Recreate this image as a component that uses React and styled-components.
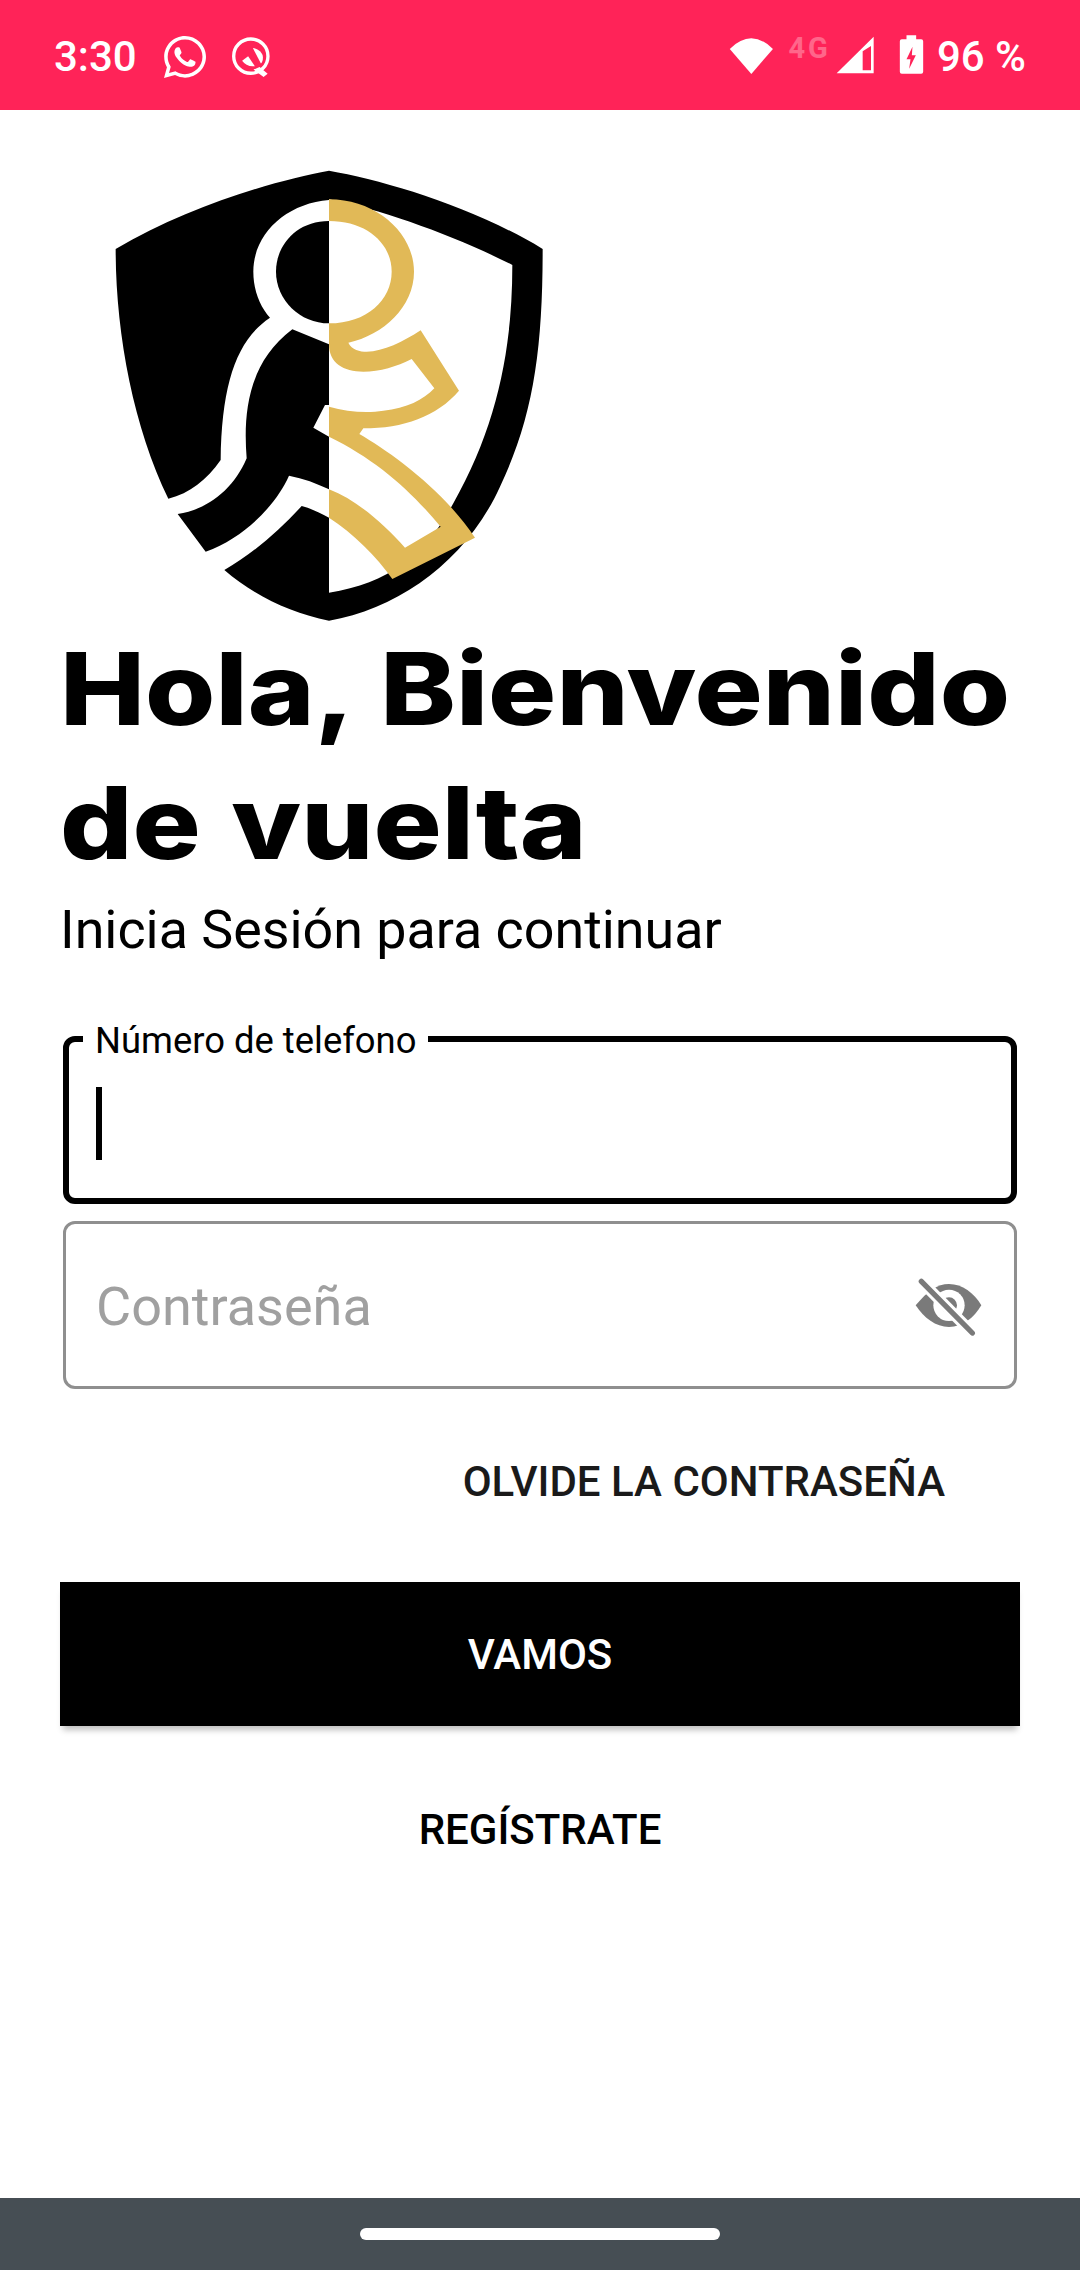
import React from 'react';
import styled, { createGlobalStyle } from 'styled-components';
import { FaWhatsapp } from 'react-icons/fa';

const GlobalStyle = createGlobalStyle`
  html, body {
    margin: 0;
    padding: 0;
    background: #fff;
    font-family: Roboto, "Liberation Sans", sans-serif;
  }
`;

const Page = styled.div`
  width: 1080px;
  height: 2270px;
  display: flex;
  flex-direction: column;
  overflow: hidden;
`;

const StatusBar = styled.div`
  height: 110px;
  flex: none;
  background: #ff2358;
  color: #fff;
  display: flex;
  align-items: center;
  justify-content: space-between;
  padding: 3px 54px 0 54px;
  box-sizing: border-box;
`;

const StatusGroup = styled.div`
  display: flex;
  align-items: center;
`;

const StatusText = styled.span`
  font-size: 42px;
  font-weight: 500;
  line-height: 44px;
  margin: ${(p) => p.$margin || '0'};
`;

const NetworkText = styled.span`
  font-size: 29px;
  font-weight: 700;
  line-height: 28px;
  letter-spacing: 3px;
  opacity: 0.3;
  margin: -18px 0 0 14px;
`;

const StatusIcon = styled.svg`
  display: block;
  margin: -4px 0 0 ${(p) => p.$left || 0}px;
`;

const Main = styled.main`
  flex: 1;
  display: flex;
  flex-direction: column;
`;

const LogoMark = styled.svg`
  display: block;
  width: 480px;
  height: 452px;
  margin: 60px 0 0 90px;
  flex: none;
`;

const Title = styled.h1`
  margin: 0 0 0 60px;
  font-family: Inter, "Liberation Sans", sans-serif;
  font-size: 100px;
  font-weight: 800;
  line-height: 134px;
  word-spacing: 5px;
  color: #000;
  transform: scaleX(1.137);
  transform-origin: left center;
  white-space: nowrap;
`;

const TitleLine = styled.span`
  display: block;
`;

const Subtitle = styled.p`
  margin: 5px 0 0 60px;
  font-size: 53.8px;
  line-height: 70px;
  color: #000;
`;

const Form = styled.form`
  margin: 71px 63px 0;
  display: flex;
  flex-direction: column;
  gap: 17px;
`;

const Field = styled.div`
  position: relative;
  height: 168px;
  box-sizing: border-box;
  border: ${(p) => (p.$focused ? '6px solid #000' : '3px solid #8f8f8f')};
  border-radius: 12px;
  display: flex;
  align-items: center;
  justify-content: space-between;
  padding: ${(p) => (p.$focused ? '0 27px' : '0 30px')};
`;

const FieldLabel = styled.label`
  position: absolute;
  left: 14px;
  top: -21px;
  padding: 0 12px;
  background: #fff;
  font-size: 36.4px;
  line-height: 40px;
  color: #000;
`;

const Caret = styled.span`
  display: block;
  width: 6px;
  height: 73px;
  margin-top: 6px;
  background: #000;
`;

const Placeholder = styled.span`
  font-size: 54px;
  line-height: 60px;
  margin-top: 4px;
  color: #a0a0a0;
`;

const EyeIcon = styled.svg`
  display: block;
  width: 70px;
  height: 60px;
  margin-top: 6px;
`;

const ForgotLink = styled.a`
  align-self: flex-end;
  margin: 68px 135px 0 0;
  font-size: 42px;
  font-weight: 500;
  line-height: 50px;
  color: #1a1a1a;
`;

const PrimaryButton = styled.button`
  display: block;
  width: 960px;
  height: 144px;
  margin: 75px 60px 0;
  border: none;
  background: #000;
  color: #fff;
  font-family: Roboto, "Liberation Sans", sans-serif;
  font-size: 42px;
  font-weight: 500;
  box-shadow: 0 7px 6px -3px rgba(0, 0, 0, 0.25);
`;

const RegisterLink = styled.a`
  align-self: center;
  margin-top: 79px;
  font-size: 42px;
  font-weight: 500;
  line-height: 50px;
  color: #000;
`;

const NavBar = styled.div`
  height: 72px;
  flex: none;
  background: #464e54;
  display: flex;
  justify-content: center;
  padding-top: 30px;
  box-sizing: border-box;
`;

const NavPill = styled.div`
  width: 360px;
  height: 12px;
  border-radius: 6px;
  background: #fff;
`;

const WhatsappIcon = styled(FaWhatsapp)`
  margin: 0 0 0 24px;
`;

const QIcon = () => (
  <svg width="42" height="42" viewBox="0 0 125 125" style={{ marginLeft: 21 }}>
    <circle cx="62" cy="60" r="51" fill="none" stroke="#fff" strokeWidth="10" />
    <path d="M70 100 L100 122 L112 112 L88 92 Z" fill="#fff" />
    <path d="M68 36 C84 38 98 50 98 64 C98 72 96 78 92 82 Z" fill="#fff" />
    <path d="M36 74 L54 60 L74 90 C58 92 44 86 36 74 Z" fill="#fff" />
  </svg>
);

const WifiIcon = () => (
  <StatusIcon width="45" height="38" viewBox="36 40 135 118">
    <path d="M36 80 Q103 14 170 80 L103 158 Z" fill="#fff" />
  </StatusIcon>
);

const SignalIcon = () => (
  <StatusIcon $left={5} width="38" height="38" viewBox="350 46 114 114">
    <path fillRule="evenodd" d="M352 158 L463 48 L463 158 Z M430 92 L430 149 L455 149 L455 76 Z" fill="#fff" />
  </StatusIcon>
);

const BatteryIcon = () => (
  <StatusIcon $left={25} width="25" height="39" viewBox="546 47 70 117">
    <path fillRule="evenodd" d="M566 48 H595 V60 H610 Q616 60 616 66 V157 Q616 163 610 163 H552 Q546 163 546 157 V66 Q546 60 552 60 H566 Z M584 82 L566 120 L578 120 L574 148 L594 108 L582 108 Z" fill="#fff" />
  </StatusIcon>
);

const ShieldLogo = () => (
  <LogoMark viewBox="0 60 1440 1356">
    <path d="M717 62 C560 90 290 170 77 297 C77 550 130 830 235 1046 C300 1030 350 990 392 930 C395 700 440 570 540 503 C510 470 490 420 490 365 C490 250 590 160 717 150 Z" fill="#000" />
    <path d="M717 213 C620 213 558 285 558 365 C558 450 630 520 717 520 Z" fill="#000" />
    <path d="M607 538 L717 583 L717 765 L705 765 L670 833 L717 860 L717 1018 C680 1000 640 985 597 977 C560 1060 470 1160 347 1205 L263 1092 C350 1080 430 1020 470 925 C460 800 470 640 607 538 Z" fill="#000" />
    <path d="M403 1260 C490 1210 570 1140 635 1068 C665 1075 690 1090 717 1103 L717 1412 C600 1390 490 1335 403 1260 Z" fill="#000" />
    <path d="M717 62 C880 90 1150 170 1358 297 C1358 600 1330 800 1230 1010 C1130 1230 930 1375 717 1412 L717 1328 C900 1300 1010 1210 1090 1060 C1220 830 1267 600 1267 345 C1100 260 880 180 717 148 Z" fill="#000" />
    <path d="M717 148 C860 148 972 250 972 365 C972 470 880 555 775 578 C785 600 810 605 830 605 C880 605 940 575 992 541 L1107 722 C1040 800 940 835 820 835 L808 852 C900 905 1060 1020 1155 1163 L907 1287 C860 1220 790 1150 717 1103 L717 1018 C800 1050 880 1120 945 1193 L1052 1130 C960 1020 860 930 717 860 L717 770 C770 785 830 790 880 782 C950 775 1000 750 1033 715 L965 627 C920 650 870 665 820 665 C760 665 717 640 717 583 L717 520 C830 520 905 450 905 365 C905 280 830 213 717 213 Z" fill="#e1b957" />
  </LogoMark>
);

const EyeOff = () => (
  <EyeIcon viewBox="70 60 210 180">
    <path d="M75 142 C110 100 140 78 175 78 C215 78 250 105 272 142 C250 180 215 207 175 207 C135 207 100 180 75 142 Z" fill="#7a7a7a" />
    <circle cx="175" cy="142" r="47" fill="#fff" />
    <circle cx="175" cy="142" r="24" fill="#7a7a7a" />
    <path d="M92 70 L245 225" stroke="#fff" strokeWidth="34" />
    <path d="M92 70 L245 225" stroke="#7a7a7a" strokeWidth="16" strokeLinecap="round" />
  </EyeIcon>
);

export default function App() {
  return (
    <Page>
      <GlobalStyle />
      <StatusBar>
        <StatusGroup>
          <StatusText>3:30</StatusText>
          <WhatsappIcon size={48} />
          <QIcon />
        </StatusGroup>
        <StatusGroup>
          <WifiIcon />
          <NetworkText>4G</NetworkText>
          <SignalIcon />
          <BatteryIcon />
          <StatusText $margin="0 0 0 13px">96 %</StatusText>
        </StatusGroup>
      </StatusBar>
      <Main>
        <ShieldLogo />
        <Title>
          <TitleLine>Hola, Bienvenido</TitleLine>
          <TitleLine>de vuelta</TitleLine>
        </Title>
        <Subtitle>Inicia Sesión para continuar</Subtitle>
        <Form>
          <Field $focused>
            <FieldLabel>Número de telefono</FieldLabel>
            <Caret />
          </Field>
          <Field>
            <Placeholder>Contraseña</Placeholder>
            <EyeOff />
          </Field>
        </Form>
        <ForgotLink>OLVIDE LA CONTRASEÑA</ForgotLink>
        <PrimaryButton>VAMOS</PrimaryButton>
        <RegisterLink>REGÍSTRATE</RegisterLink>
      </Main>
      <NavBar>
        <NavPill />
      </NavBar>
    </Page>
  );
}
